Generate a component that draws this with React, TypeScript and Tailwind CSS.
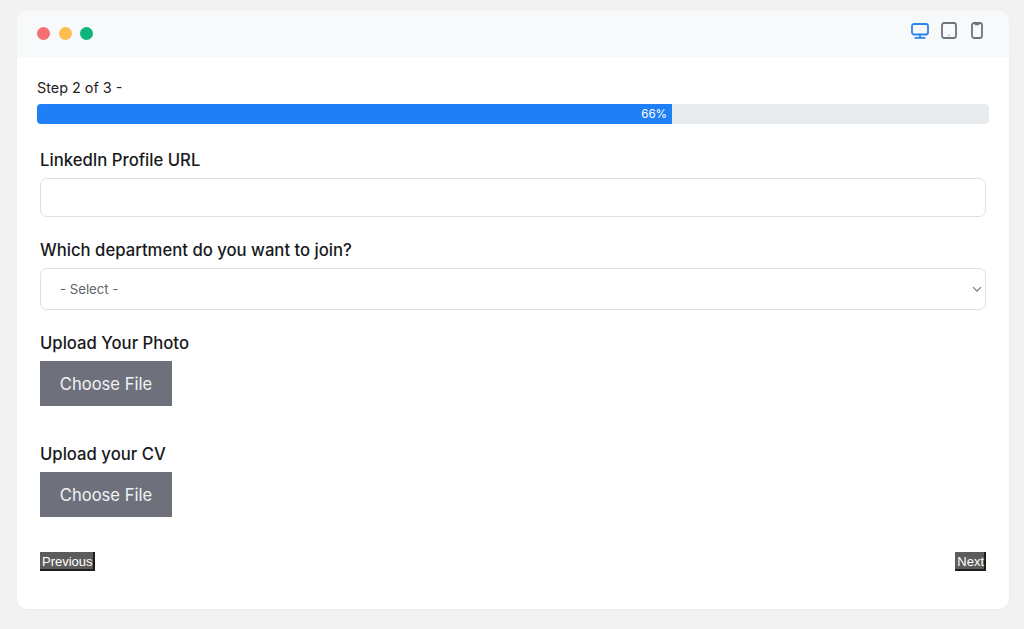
function DesktopIcon() {
	return (
		<svg width="18" height="16" viewBox="0 0 18 16" fill="none" stroke="#2b84ea" strokeWidth="1.8" strokeLinejoin="round" strokeLinecap="round">
			<rect x="1" y="1" width="16" height="10.5" rx="2" />
			<path d="M9 11.5V14.6M4.2 14.8H13.8" />
		</svg>
	)
}

function TabletIcon() {
	return (
		<svg width="16" height="17" viewBox="0 0 16 17" fill="none" stroke="#6f7277" strokeWidth="1.8">
			<rect x="1" y="1" width="14" height="15" rx="2.2" />
			<circle cx="8" cy="13.4" r="0.4" fill="#6f7277" strokeWidth="0.5" />
		</svg>
	)
}

function PhoneIcon() {
	return (
		<svg width="12" height="17" viewBox="0 0 12 17" fill="none" stroke="#6f7277" strokeWidth="1.8" strokeLinecap="round">
			<rect x="1" y="1" width="10" height="15" rx="2.2" />
			<path d="M4.6 2.4H7.4" />
		</svg>
	)
}

function Label({ children, className }: { children: string; className: string }) {
	return <div className={`text-[16.7px] leading-[20px] font-medium text-[#17191c] ${className}`}>{children}</div>
}

function FileButton({ className }: { className: string }) {
	return (
		<button type="button" className={`block w-[132px] h-[45px] pt-[1px] bg-[#6e717c] text-[#f1f2f4] text-[16.6px] text-center ${className}`}>
			Choose File
		</button>
	)
}

function NavButton({ children }: { children: string }) {
	return (
		<button
			type="button"
			className="h-[19px] pl-[2px] pr-[0px] pt-[1px] bg-[#5c5c5c] text-white text-[13px] leading-[17px] font-['Liberation_Sans',sans-serif] border-r-2 border-b-2 border-[#1c1c1c]"
		>
			{children}
		</button>
	)
}

export default function App() {
	return (
		<div className="w-[1024px] h-[629px] overflow-hidden bg-[#f2f2f2] pt-[11px] pl-[17px] font-['Inter',sans-serif]">
			<div className="w-[992px] h-[598px] bg-white rounded-[10px] overflow-hidden shadow-[0_1px_3px_rgba(0,0,0,0.04)]">
				{/* Window bar */}
				<div className="h-[46px] bg-[#f7f9fa] pl-[20px] pr-[26px] flex items-center justify-between">
					<div className="flex items-center gap-[8.5px] -mt-[1px]">
						<span className="size-[13px] rounded-full bg-[#f46f72]" />
						<span className="size-[13px] rounded-full bg-[#fdbd4f]" />
						<span className="size-[13px] rounded-full bg-[#0db47b]" />
					</div>
					<div className="flex items-center gap-[14px] -mt-[7px]">
						<div className="-mr-[2px]">
							<DesktopIcon />
						</div>
						<TabletIcon />
						<PhoneIcon />
					</div>
				</div>

				<div className="pl-[20px] pr-[20px]">
					<div className="mt-[21px] h-[20px] text-[14.4px] leading-[20px] text-[#1f2125]">Step 2 of 3 -</div>
					<div className="mt-[6px] h-[20px] w-[952px] bg-[#e9ecef] rounded-[4px] overflow-hidden">
						<div className="h-full w-[635px] bg-[#1f80f5] text-white text-[11.6px] leading-[20px] text-right pr-[5px]">66%</div>
					</div>

					<div className="px-[3px]">
						<Label className="mt-[26px]">LinkedIn Profile URL</Label>
						<input type="text" className="block mt-[8px] w-[946px] h-[39px] bg-white border border-[#dcdfe2] rounded-[7px]" />

						<Label className="mt-[23px]">Which department do you want to join?</Label>
						<div className="relative mt-[8px] w-[946px] h-[42px] pt-[2px] bg-white border border-[#dcdfe2] rounded-[7px] flex items-center pl-[19px] text-[13.2px] text-[#5f6266]">
							- Select -
							<svg className="absolute right-[3px] top-[17px]" width="10" height="7" viewBox="0 0 10 7" fill="none" stroke="#777" strokeWidth="1.2">
								<path d="M1 1.2L5 5.2L9 1.2" />
							</svg>
						</div>

						<Label className="mt-[23px]">Upload Your Photo</Label>
						<FileButton className="mt-[8px]" />

						<Label className="mt-[38px]">Upload your CV</Label>
						<FileButton className="mt-[8px]" />

						<div className="mt-[35px] flex justify-between">
							<NavButton>Previous</NavButton>
							<NavButton>Next</NavButton>
						</div>
					</div>
				</div>
			</div>
		</div>
	)
}
